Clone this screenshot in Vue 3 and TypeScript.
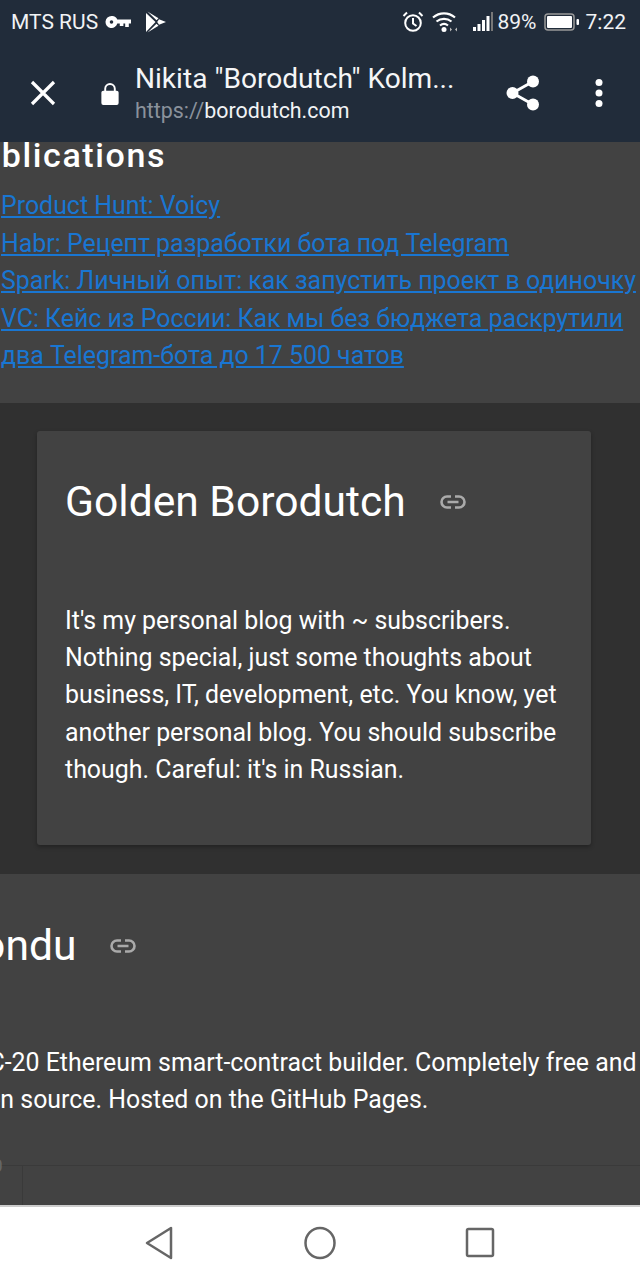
<template>
  <div class="phone">
    <header class="chrome">
      <div class="status">
        <div class="status-left">
          <span>MTS RUS</span>
          <svg class="key" width="26" height="12" viewBox="0 0 26 12">
            <path fill="#fff" fill-rule="evenodd" d="M6.500 0a6 6 0 0 1 5.800 3.600H26v4h-2.200V11h-3.600V7.600h-1.800V10h-3.600V7.600h-2.500A6 6 0 1 1 6.500 0zm0 4.200a1.800 1.800 0 1 0 0 3.600 1.800 1.800 0 0 0 0-3.600z" />
          </svg>
          <svg class="play" width="22" height="22" viewBox="0 0 22 22">
            <path fill="#fff" d="M1 2l9.500 9L1 21zM2.500 0.500l11 6.800-2 2zM2.500 21.500l9-8.800 2 2zM14 8.300l7 2.700-7 2.700-1.800-2.700z" />
          </svg>
        </div>
        <div class="status-right">
          <svg width="22" height="22" viewBox="0 0 22 22" fill="none" stroke="#fff" stroke-width="2">
            <circle cx="11" cy="12" r="7.800" />
            <path d="M11 7v5.500l3.500 2.500M1.500 5L5 1.500M20.500 5L17 1.500" />
          </svg>
          <svg class="wifi" width="26" height="22" viewBox="0 0 26 22" fill="none" stroke="#fff" stroke-width="2.200">
            <path d="M1 6.500c6.500-5.500 15.500-5.500 22 0M4.500 10.500c4.500-3.500 10.500-3.500 15 0M8 14.500c2.500-2 5.500-2 8 0" />
            <circle cx="12" cy="18.500" r="2.500" fill="#fff" stroke="none" />
            <path d="M18 16.500l2 2-2 2zM25 16.500l-2 2 2 2z" fill="#bbb" stroke="none" />
          </svg>
          <svg class="signal" width="20" height="20" viewBox="0 0 20 20" fill="#fff">
            <rect x="0" y="15" width="3" height="4" />
            <rect x="4.500" y="12" width="3" height="7" />
            <rect x="9" y="8" width="3" height="11" />
            <rect x="13.500" y="4" width="3" height="15" />
            <rect x="18" y="0" width="2" height="19" fill="#777" />
          </svg>
          <span class="percent">89%</span>
          <svg width="35" height="18" viewBox="0 0 35 18">
            <rect x="1" y="1" width="29" height="16" rx="3" fill="none" stroke="#999" stroke-width="1.500" />
            <rect x="3" y="3" width="25" height="12" rx="1" fill="#fff" />
            <rect x="32.500" y="6" width="2.500" height="6" rx="1" fill="#fff" />
          </svg>
          <span>7:22</span>
        </div>
      </div>
      <div class="toolbar">
        <svg class="close" width="26" height="26" viewBox="0 0 26 26" stroke="#fff" stroke-width="3.200">
          <path d="M2 2l22 22M24 2L2 24" />
        </svg>
        <svg class="lock" width="18" height="23" viewBox="0 0 18 24">
          <path fill="#fff" d="M3 9V7a6 6 0 0 1 12 0v2h1a2 2 0 0 1 2 2v11a2 2 0 0 1-2 2H2a2 2 0 0 1-2-2V11a2 2 0 0 1 2-2zm2 0h8V7a4 4 0 0 0-8 0z" />
        </svg>
        <div class="title-wrap">
          <div class="title">Nikita "Borodutch" Kolm...</div>
          <div class="url"><span class="scheme">https://</span>borodutch.com</div>
        </div>
        <svg class="share" width="34" height="36" viewBox="0 0 34 36" fill="#fff">
          <circle cx="6.500" cy="18" r="6" />
          <circle cx="27" cy="6.500" r="6" />
          <circle cx="27" cy="29.500" r="6" />
          <path d="M6.500 18L27 6.500M6.500 18L27 29.500" stroke="#fff" stroke-width="3" />
        </svg>
        <svg class="more" width="10" height="30" viewBox="0 0 10 30" fill="#fff">
          <circle cx="5" cy="4.500" r="3.500" />
          <circle cx="5" cy="15" r="3.500" />
          <circle cx="5" cy="25.500" r="3.500" />
        </svg>
      </div>
    </header>

    <main class="content">
      <section class="publications">
        <h2>Publications</h2>
        <a v-for="link in links" :key="link" href="#">{{ link }}</a>
      </section>

      <section class="dark">
        <article class="card">
          <h3>Golden Borodutch <LinkGlyph /></h3>
          <p>It's my personal blog with ~ subscribers. Nothing special, just some thoughts about business, IT, development, etc. You know, yet another personal blog. You should subscribe though. Careful: it's in Russian.</p>
        </article>
      </section>

      <section class="project">
        <h3>Fondu <LinkGlyph /></h3>
        <p>ERC-20 Ethereum smart-contract builder. Completely free and<br />open source. Hosted on the GitHub Pages.</p>
        <div class="table-edge">
          <span class="cut">0</span>
          <div class="cell"></div>
        </div>
      </section>
    </main>

    <footer class="nav">
      <svg width="32" height="34" viewBox="0 0 32 34" fill="none" stroke="#666" stroke-width="2.500" stroke-linejoin="round">
        <path d="M27 2v30L3 17z" />
      </svg>
      <svg width="32" height="34" viewBox="0 0 32 34" fill="none" stroke="#666" stroke-width="2.500">
        <ellipse cx="16" cy="17" rx="14.500" ry="15" />
      </svg>
      <svg width="32" height="34" viewBox="0 0 32 34" fill="none" stroke="#666" stroke-width="2.500" stroke-linejoin="round">
        <rect x="3" y="3" width="26" height="27" rx="1.500" />
      </svg>
    </footer>
  </div>
</template>

<script setup lang="ts">
import { h } from 'vue'

const links: string[] = [
  'Product Hunt: Voicy',
  'Habr: Рецепт разработки бота под Telegram',
  'Spark: Личный опыт: как запустить проект в одиночку',
  'VC: Кейс из России: Как мы без бюджета раскрутили два Telegram-бота до 17 500 чатов',
]

const LinkGlyph = () =>
  h(
    'svg',
    { class: 'link-glyph', width: 26, height: 14, viewBox: '0 0 26 14', fill: 'none', stroke: '#aaa', 'stroke-width': 2.6 },
    [h('path', { d: 'M11 1.500H7a5.500 5.500 0 0 0 0 11h4M15 1.500h4a5.500 5.500 0 0 1 0 11h-4M7.500 7h11' })],
  )
</script>

<style>
html,
body {
  margin: 0;
  background: #424242;
}
</style>

<style scoped>
.phone {
  width: 640px;
  height: 1280px;
  overflow: hidden;
  display: flex;
  flex-direction: column;
  font-family: Roboto, "Noto Sans", sans-serif;
  color: #fff;
}

.chrome {
  flex: none;
  height: 142px;
  background: #212c3a;
  position: relative;
  z-index: 1;
}

.status {
  height: 44px;
  display: flex;
  justify-content: space-between;
  align-items: center;
  padding: 0 14px 0 11px;
  font-size: 21px;
  color: #f1f3f5;
}

.status-left,
.status-right {
  display: flex;
  align-items: center;
}

.key {
  margin-left: 7px;
}

.play {
  margin-left: 14px;
}

.wifi {
  margin-left: 8px;
}

.signal {
  margin-left: 15px;
}

.percent {
  margin: 0 7px 0 5px;
}

.status-right span:last-child {
  margin-left: 7px;
}

.toolbar {
  height: 98px;
  display: flex;
  align-items: center;
  padding-left: 30px;
}

.close {
  flex: none;
}

.lock {
  flex: none;
  margin-left: 45px;
}

.title-wrap {
  width: 352px;
  margin-left: 16px;
  padding-top: 2px;
}

.title {
  font-size: 28.100px;
  line-height: 34px;
  color: #f5f6f7;
  white-space: nowrap;
}

.url {
  font-size: 21.400px;
  line-height: 30px;
  color: #f1f3f5;
}

.scheme {
  color: #8a929c;
}

.share {
  margin-left: 19px;
}

.more {
  margin-left: 54px;
}

.content {
  flex: 1;
  min-height: 0;
  overflow: hidden;
}

.publications {
  display: flow-root;
  height: 261px;
  box-sizing: border-box;
  background: #424242;
  padding-left: 1px;
}

h2 {
  margin: -6px 0 0 -43px;
  font-size: 34px;
  letter-spacing: 1.600px;
  line-height: 38px;
  font-weight: 500;
  padding-bottom: 13px;
}

.publications a {
  display: block;
  width: 637px;
  font-size: 24.900px;
  line-height: 37.500px;
  color: #1976d2;
}

.dark {
  height: 471px;
  box-sizing: border-box;
  background: #303030;
  padding: 28px 49px 29px 37px;
}

.card {
  height: 414px;
  box-sizing: border-box;
  padding: 43px 28px 0;
  background: #424242;
  border-radius: 3px;
  box-shadow: 0 2px 4px rgba(0, 0, 0, 0.3);
}

h3 {
  margin: 0;
  display: flex;
  align-items: center;
  font-size: 42.600px;
  line-height: 54px;
  font-weight: 400;
  white-space: nowrap;
}

.link-glyph {
  margin: 1px 0 0 34px;
}

p {
  margin: 0;
  font-size: 24.900px;
  line-height: 37.200px;
}

.card p {
  margin-top: 74px;
}

.project {
  display: flow-root;
  height: 331px;
  box-sizing: border-box;
  background: #424242;
  padding-top: 44px;
  position: relative;
}

.project h3 {
  margin-left: -42px;
}

.project p {
  margin: 72px 0 0 -41px;
  white-space: nowrap;
}

.table-edge {
  display: flex;
  margin-top: 47px;
  height: 40px;
  border-top: 1px solid #3a3a3a;
  position: relative;
}

.cut {
  position: absolute;
  left: -8px;
  top: -12px;
  font-size: 19px;
  color: #666;
}

.cell {
  width: 22px;
  border-right: 1px solid #3a3a3a;
}

.nav {
  flex: none;
  height: 75px;
  box-sizing: border-box;
  background: #fff;
  border-top: 2px solid #ccc;
  display: flex;
  align-items: center;
  justify-content: center;
  gap: 128px;
  padding-bottom: 1px;
}
</style>
